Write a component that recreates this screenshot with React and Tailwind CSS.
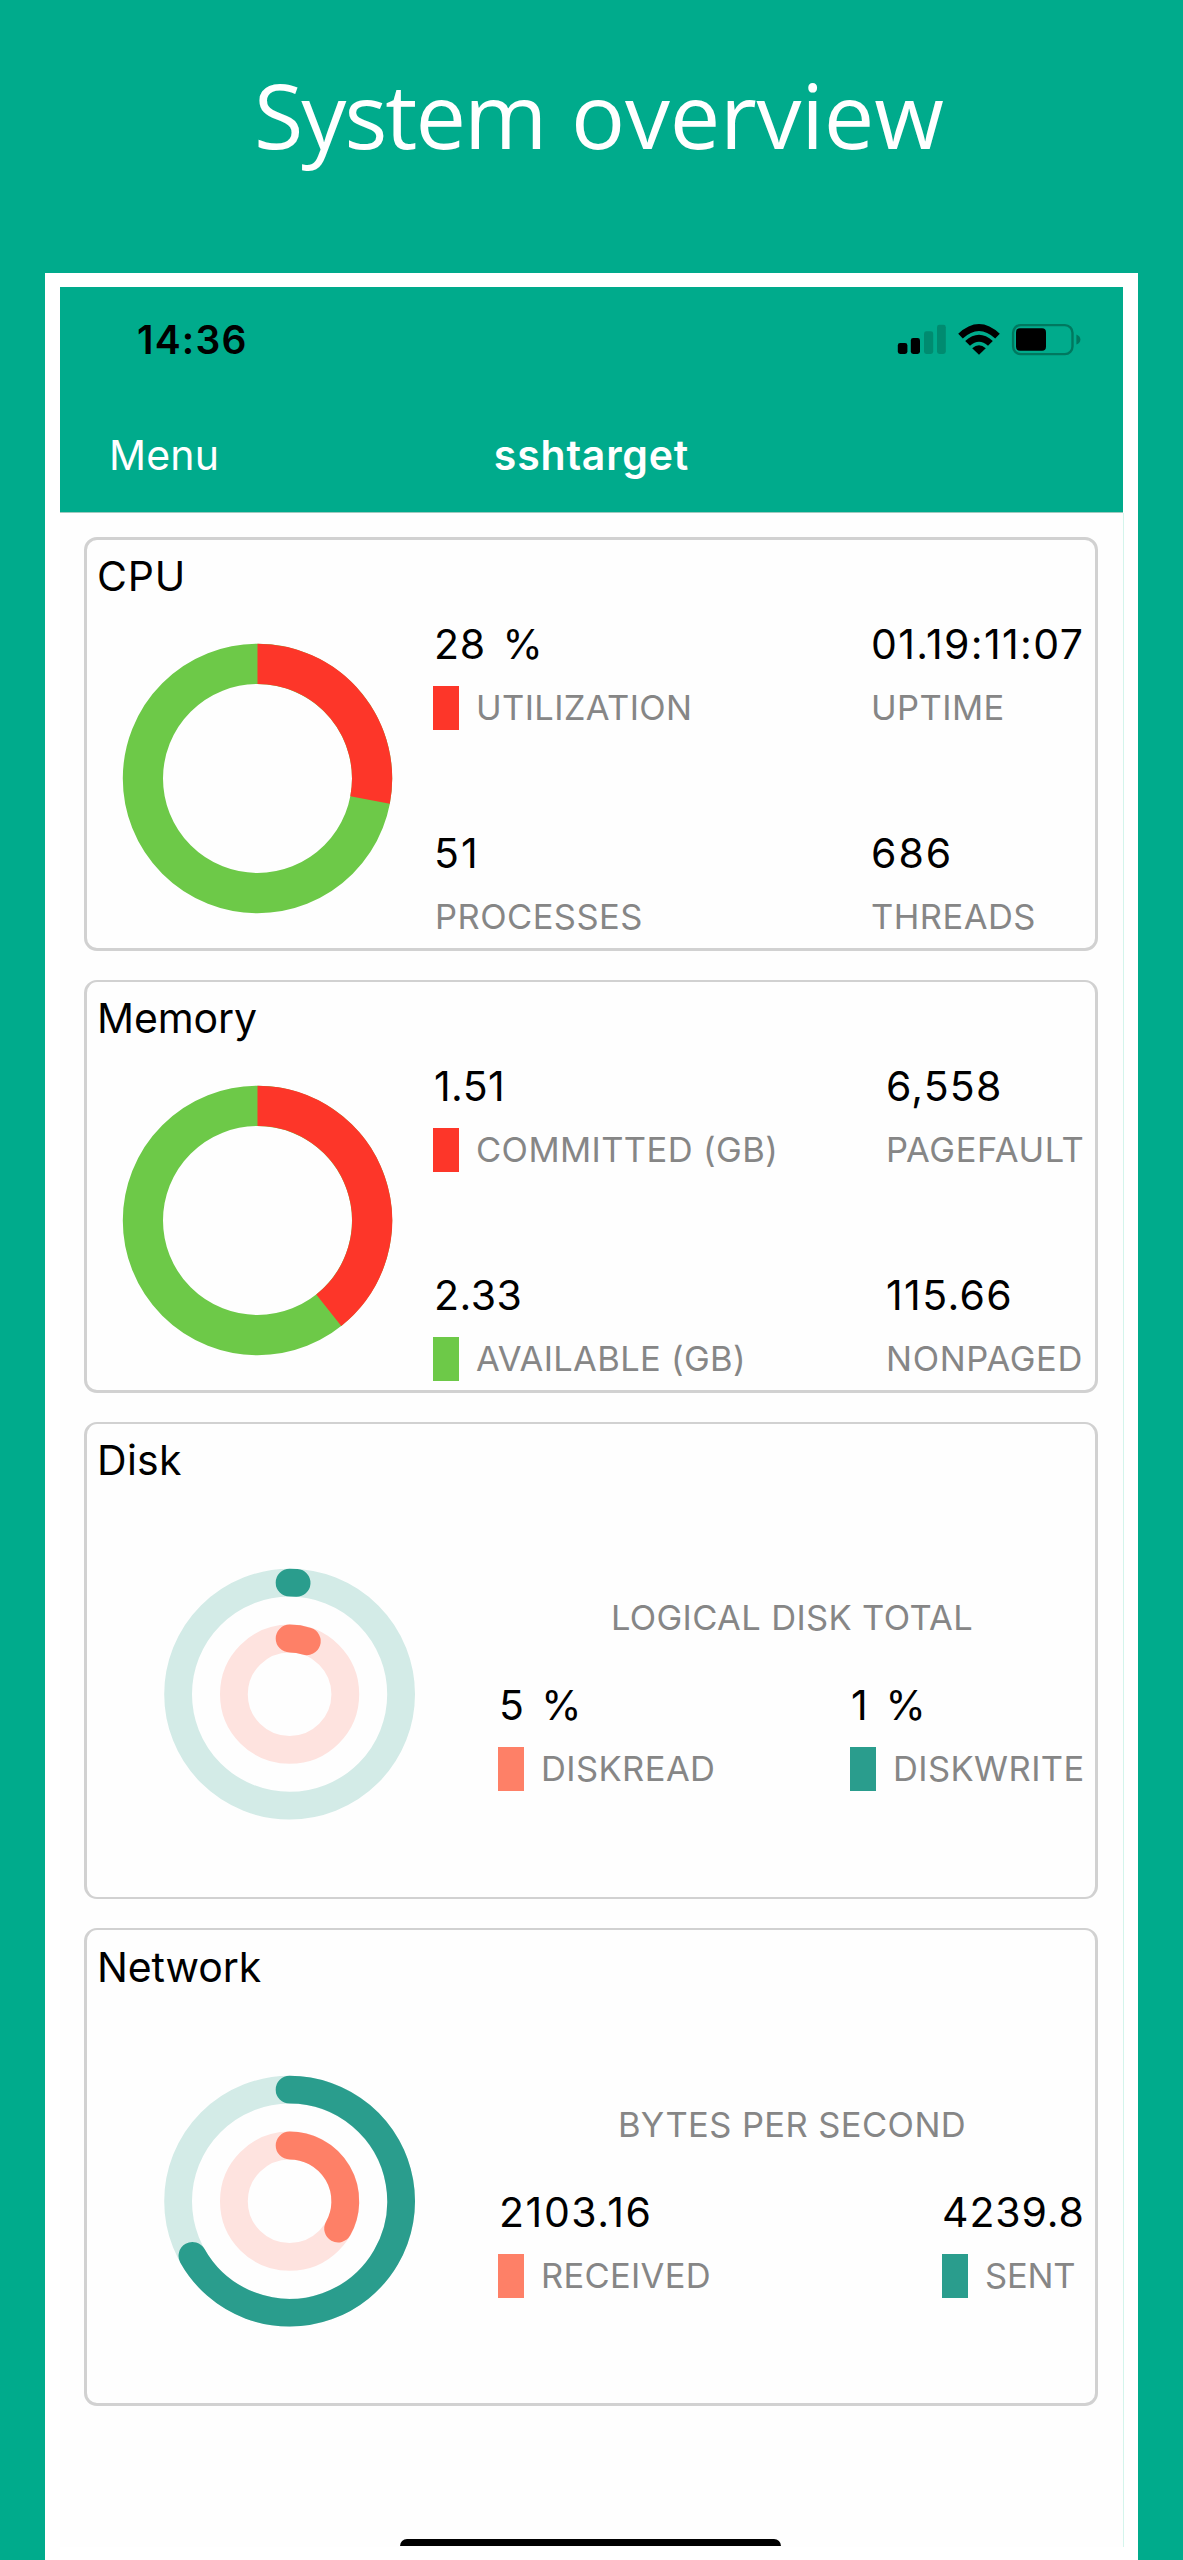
import React from "react";

const COLORS = {
  red: "#fd3629",
  green: "#6dc948",
  teal: "#2a9d8d",
  tealTrack: "#d3ebe7",
  coral: "#fe8067",
  coralTrack: "#fee3df",
};

function arcPoint(cx, cy, r, turn) {
  const a = turn * 2 * Math.PI;
  return `${(cx + r * Math.sin(a)).toFixed(2)} ${(cy - r * Math.cos(a)).toFixed(2)}`;
}

function Arc({ cx, cy, r, width, value, color, cap = "butt" }) {
  return (
    <path
      d={`M ${arcPoint(cx, cy, r, 0)} A ${r} ${r} 0 ${value > 0.5 ? 1 : 0} 1 ${arcPoint(cx, cy, r, value)}`}
      fill="none"
      stroke={color}
      strokeWidth={width}
      strokeLinecap={cap}
    />
  );
}

function Donut({ value }) {
  const c = 135.5;
  const r = 114.6;
  return (
    <svg width="272" height="272" viewBox="0 0 272 272" className="mt-[43px] ml-[35px] shrink-0">
      <circle cx={c} cy={c} r={r} fill="none" stroke={COLORS.green} strokeWidth="40.2" />
      <Arc cx={c} cy={c} r={r} width={40.2} value={value} color={COLORS.red} />
    </svg>
  );
}

function Rings({ outer, inner }) {
  const cx = 126.6;
  const cy = 126.2;
  return (
    <svg width="254" height="254" viewBox="0 0 254 254" className="mt-[84px] ml-[76px] shrink-0">
      <circle cx={cx} cy={cy} r="111.5" fill="none" stroke={COLORS.tealTrack} strokeWidth="27.8" />
      <circle cx={cx} cy={cy} r="55.7" fill="none" stroke={COLORS.coralTrack} strokeWidth="27.8" />
      <Arc cx={cx} cy={cy} r={111.5} width={27.8} value={outer} color={COLORS.teal} cap="round" />
      <Arc cx={cx} cy={cy} r={55.7} width={27.8} value={inner} color={COLORS.coral} cap="round" />
    </svg>
  );
}

function Label({ children, className }) {
  return (
    <span className={`text-[34.5px] leading-[44px] whitespace-nowrap text-[#868686] ${className}`}>
      {children}
    </span>
  );
}

function Stat({ value, label, swatch, valueClass = "", labelClass = "" }) {
  return (
    <div className="flex flex-col gap-[18px]">
      <div className={`text-[41px] leading-[48px] whitespace-pre text-black ${valueClass}`}>{value}</div>
      <div className="flex h-[44px] gap-[17px]">
        {swatch && <span className={`w-[26px] shrink-0 ${swatch}`} />}
        <Label className={labelClass}>{label}</Label>
      </div>
    </div>
  );
}

function Card({ title, titleClass, className, children }) {
  return (
    <section className={`flex flex-col rounded-[13px] border-x-[3px] border-[#d1d1d1] ${className}`}>
      <h2 className={`pl-[10px] text-[41px] leading-[48px] text-black ${titleClass}`}>{title}</h2>
      <div className="flex">{children}</div>
    </section>
  );
}

function QuadStats({ left, right, rightClass }) {
  return (
    <div className="mt-[20px] ml-[39px] flex flex-1 justify-between pr-[9px]">
      <div className="flex flex-col gap-[99px]">{left}</div>
      <div className={`flex flex-col gap-[99px] ${rightClass}`}>{right}</div>
    </div>
  );
}

function PairStats({ heading, headingClass, left, right, rightClass }) {
  return (
    <div className="mt-[112px] ml-[81px] flex flex-1 flex-col gap-[41px] pr-[9px]">
      <div className="flex justify-center">
        <Label className={headingClass}>{heading}</Label>
      </div>
      <div className="flex justify-between">
        {left}
        <div className={rightClass}>{right}</div>
      </div>
    </div>
  );
}

function StatusIcons() {
  return (
    <svg width="126" height="34" viewBox="897 322 126 34" className="overflow-visible">
      <rect x="897.8" y="343" width="9.6" height="11" rx="2.4" />
      <rect x="910.8" y="338" width="9.2" height="16" rx="2.4" />
      <rect x="924" y="331.3" width="9.2" height="22.7" rx="2.4" fill="#008b70" />
      <rect x="937" y="324.8" width="8.8" height="29.2" rx="2.4" fill="#008b70" />
      <path d="M958.2 333.8 Q979 314.2 999.8 333.8 L995.2 338.4 Q979 323.4 962.8 338.4 Z" />
      <path d="M965.2 341 Q979 328.4 992.8 341 L988 345.8 Q979 337.6 970 345.8 Z" />
      <path d="M972.2 348.2 Q979 342.4 985.8 348.2 L979 354.8 Z" />
      <rect x="1013.1" y="325.1" width="59.4" height="29" rx="7.6" fill="none" stroke="#00785f" strokeWidth="2.4" />
      <rect x="1016" y="328.2" width="30" height="22.6" rx="4" />
      <path d="M1076.4 334.4 Q1080.4 336 1080.4 339.5 Q1080.4 343 1076.4 344.6 Z" fill="#00785f" />
    </svg>
  );
}

export default function App() {
  return (
    <div className="flex h-[2560px] w-[1183px] flex-col overflow-hidden bg-[#00ab8c] font-['Inter',sans-serif]">
      <h1 className="h-[273px] pt-[54px] pl-[254px] font-['Open_Sans',sans-serif] text-[90px] leading-[120px] whitespace-nowrap text-white">
        <span className="tracking-[-2px]">System</span>
        <span className="tracking-[-0.2px] [word-spacing:2.5px]"> overview</span>
      </h1>

      <main className="ml-[45px] flex h-[2287px] w-[1093px] flex-col bg-white px-[15px] pt-[14px]">
        <header className="flex h-[226px] flex-col border-b border-[#9fcabf] bg-[#00ab8c]">
          <div className="flex justify-between pt-[29px] pr-[103px] pl-[77px]">
            <span className="text-[39px] leading-[48px] font-semibold tracking-[1.2px] text-black">14:36</span>
            <div className="mt-[6px] w-[63px]">
              <div className="-ml-[60px]">
                <StatusIcons />
              </div>
            </div>
          </div>
          <nav className="mt-[67px] grid grid-cols-3 px-[49px] text-[41px] leading-[48px] text-white">
            <span className="tracking-[0.2px]">Menu</span>
            <span className="text-center font-semibold tracking-[0.8px]">sshtarget</span>
          </nav>
        </header>

        <div className="-mr-px flex h-[2034px] flex-col border-r border-[#d4f5ec] bg-[#fefefe] pt-[24px] pr-[25px] pl-[24px]">
          <Card title="CPU" titleClass="tracking-[0.8px]" className="h-[414px] border-y-[3px] pt-[12px]">
            <Donut value={0.28} />
            <QuadStats
              rightClass="w-[215px]"
              left={
                <>
                  <Stat value="28 %" label="UTILIZATION" swatch="bg-[#fd3629]" valueClass="tracking-[0.7px] [word-spacing:4.5px] pl-px" labelClass="tracking-[0.36px]" />
                  <Stat value="51" label="PROCESSES" valueClass="tracking-[2px] pl-px" labelClass="tracking-[0.46px] pl-[2px]" />
                </>
              }
              right={
                <>
                  <Stat value="01.19:11:07" label="UPTIME" valueClass="tracking-[1.38px]" labelClass="tracking-[0.43px]" />
                  <Stat value="686" label="THREADS" valueClass="tracking-[2px]" labelClass="tracking-[0.47px]" />
                </>
              }
            />
          </Card>

          <Card title="Memory" titleClass="tracking-[-0.1px]" className="mt-[29px] h-[413px] border-t-2 border-b-[3px] pt-[12px]">
            <Donut value={0.3932} />
            <QuadStats
              rightClass="w-[200px]"
              left={
                <>
                  <Stat value="1.51" label="COMMITTED (GB)" swatch="bg-[#fd3629]" valueClass="tracking-[0.4px] pl-px" labelClass="tracking-[0.4px]" />
                  <Stat value="2.33" label="AVAILABLE (GB)" swatch="bg-[#6dc948]" valueClass="tracking-[0.5px] pl-px" labelClass="tracking-[0.33px]" />
                </>
              }
              right={
                <>
                  <Stat value="6,558" label="PAGEFAULT" valueClass="tracking-[1.2px]" labelClass="tracking-[0.6px]" />
                  <Stat value="115.66" label="NONPAGED" valueClass="tracking-[1.4px]" labelClass="tracking-[0.65px]" />
                </>
              }
            />
          </Card>

          <Card title="Disk" titleClass="tracking-[0.3px]" className="mt-[29px] h-[477px] border-y-2 pt-[12px]">
            <Rings outer={0.01} inner={0.05} />
            <PairStats
              heading="LOGICAL DISK TOTAL"
              headingClass="tracking-[0.35px]"
              rightClass="w-[236px]"
              left={<Stat value="5 %" label="DISKREAD" swatch="bg-[#fe8067]" valueClass="tracking-[0.7px] [word-spacing:4.5px] pl-px" labelClass="tracking-[0.41px]" />}
              right={<Stat value="1 %" label="DISKWRITE" swatch="bg-[#2a9d8d]" valueClass="tracking-[0.7px] [word-spacing:5px] pl-px" labelClass="tracking-[0.41px]" />}
            />
          </Card>

          <Card title="Network" titleClass="tracking-[-0.1px]" className="mt-[29px] h-[478px] border-t-2 border-b-[3px] pt-[13px]">
            <Rings outer={0.6684} inner={0.3316} />
            <PairStats
              heading="BYTES PER SECOND"
              headingClass="tracking-[0.42px]"
              rightClass="w-[144px]"
              left={<Stat value="2103.16" label="RECEIVED" swatch="bg-[#fe8067]" valueClass="tracking-[1.6px] pl-px" labelClass="tracking-[0.29px]" />}
              right={<Stat value="4239.8" label="SENT" swatch="bg-[#2a9d8d]" valueClass="tracking-[0.9px]" labelClass="tracking-[-0.19px]" />}
            />
          </Card>

          <div className="mt-[133px] ml-[316px] h-[7px] w-[381px] rounded-t-[7px] bg-black" />
        </div>
      </main>
    </div>
  );
}
